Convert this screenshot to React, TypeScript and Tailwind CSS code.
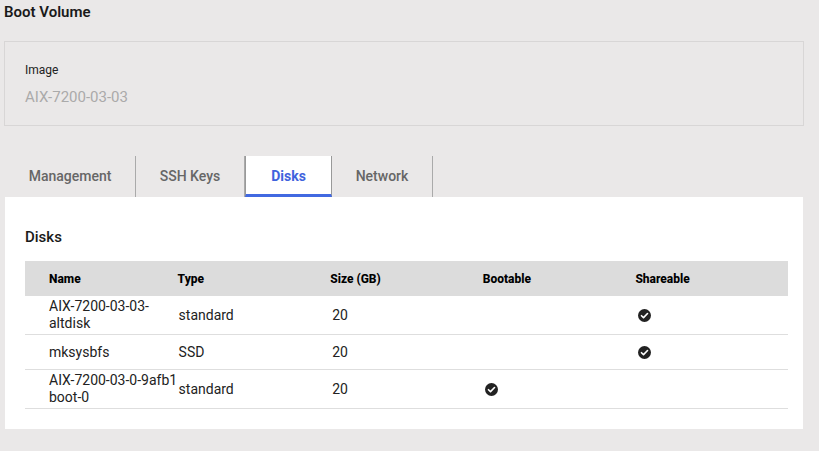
import React from "react";

type Disk = {
  name: string[];
  type: string;
  size: number;
  bootable: boolean;
  shareable: boolean;
};

const disks: Disk[] = [
  { name: ["AIX-7200-03-03-", "altdisk"], type: "standard", size: 20, bootable: false, shareable: true },
  { name: ["mksysbfs"], type: "SSD", size: 20, bootable: false, shareable: true },
  { name: ["AIX-7200-03-0-9afb1", "boot-0"], type: "standard", size: 20, bootable: true, shareable: false },
];

const tabs = [
  { label: "Management", cls: "w-[131px]" },
  { label: "SSH Keys", cls: "w-[109px]" },
  { label: "Disks", cls: "w-[87px]" },
  { label: "Network", cls: "w-[101px]" },
];

function Check() {
  return (
    <svg viewBox="0 0 12 12" className="w-[13px] h-[13px]">
      <circle cx="6" cy="6" r="6" fill="#222" />
      <path d="M3.2 6.2 L5.1 8 L8.8 4.2" stroke="#fff" strokeWidth="1.5" fill="none" strokeLinecap="round" strokeLinejoin="round" />
    </svg>
  );
}

function App() {
  return (
    <div
      className="w-[819px] h-[451px] overflow-hidden bg-[#eae8e8] text-[#222] pl-[4px]"
      style={{ fontFamily: "Roboto, 'Noto Sans', sans-serif" }}
    >
      <h1 className="pt-[3px] text-[15px] leading-[18px] font-semibold text-[#1a1a1a]">
        Boot Volume
      </h1>

      <div className="mt-[20px] w-[800px] h-[85px] border border-[#d8d6d6] pl-[20px] pt-[21px]">
        <div className="text-[12px] leading-[15px] text-[#222]">Image</div>
        <div className="mt-[10px] text-[15px] leading-[18px] text-[#aaa]">AIX-7200-03-03</div>
      </div>

      <div className="mt-[30px] ml-[1px] flex h-[41px]">
        {tabs.map((t) => {
          const active = t.label === "Disks";
          return (
            <div
              key={t.label}
              className={
                active
                  ? `${t.cls} flex items-center justify-center bg-white border-x border-[#999] text-[14px] font-bold text-[#3f63dd] border-b-[3px] border-b-[#4169e1] pt-[2px]`
                  : `${t.cls} flex items-center justify-center text-[14px] font-medium text-[#666] border-r border-[#aaa] pb-[1px]`
              }
            >
              {t.label}
            </div>
          );
        })}
      </div>

      <div className="ml-[1px] w-[798px] h-[232px] bg-white pl-[20px] pr-[15px] pt-[31px]">
        <h2 className="text-[15px] leading-[18px] font-medium text-[#1a1a1a]">Disks</h2>

        <div className="mt-[15px] w-[763px]">
          <div className="grid grid-cols-5 h-[35px] items-center bg-[#dcdcdc] text-[12px] font-extrabold text-black">
            <div className="pl-[24px]">Name</div>
            <div>Type</div>
            <div>Size (GB)</div>
            <div>Bootable</div>
            <div>Shareable</div>
          </div>
          {disks.map((d, i) => (
            <div
              key={i}
              className="grid grid-cols-5 min-h-[35px] py-[2px] items-center border-b border-[#dedede] text-[14px] leading-[17px] text-[#222]"
            >
              <div className="pl-[24px] whitespace-nowrap">
                {d.name.map((n) => (
                  <div key={n}>{n}</div>
                ))}
              </div>
              <div className="pl-[1px]">{d.type}</div>
              <div className="pl-[2px]">{d.size}</div>
              <div className="pl-[2px] flex">{d.bootable && <Check />}</div>
              <div className="pl-[3px] flex">{d.shareable && <Check />}</div>
            </div>
          ))}
        </div>
      </div>
    </div>
  );
}

export default App;
